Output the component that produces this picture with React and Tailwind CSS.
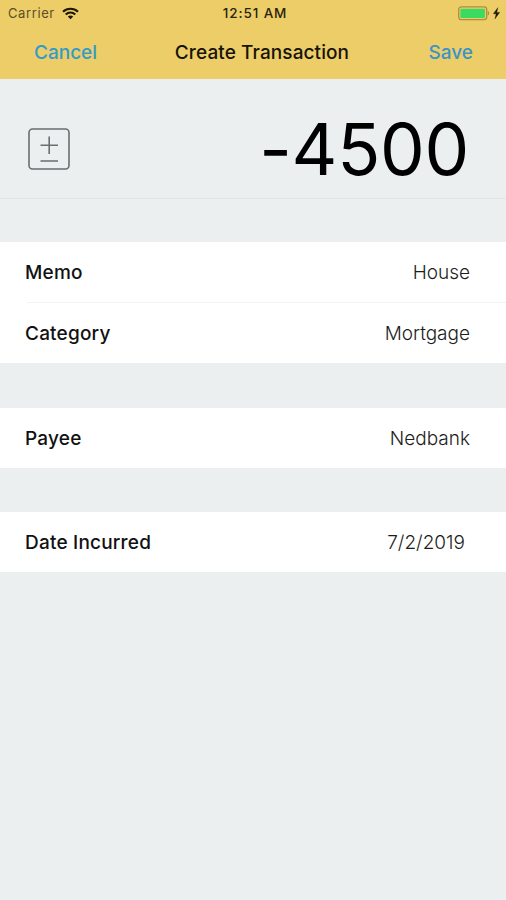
import React from 'react';

const WifiIcon = () => (
  <svg className="w-[17px] h-[13px]" viewBox="0 0 17 13" fill="none" stroke="#1c1706" strokeWidth="2.1">
    <path d="M1 4.7C5.2 0.7 11.8 0.7 16 4.7" />
    <path d="M3.7 7.6C6.5 5 10.5 5 13.3 7.6" />
    <path d="M8.5 12.2L5.8 9.5C7.4 8.1 9.6 8.1 11.2 9.5Z" fill="#1c1706" stroke="none" />
  </svg>
);

const BatteryIcon = () => (
  <svg className="w-[42px] h-[16px]" viewBox="0 0 42 16" fill="none">
    <rect x="0.7" y="0.9" width="28" height="12.8" rx="2.6" stroke="#ab903f" strokeWidth="1.3" />
    <path d="M29.8 5C31.6 5.6 31.6 8.9 29.8 9.5Z" fill="#ab903f" />
    <rect x="2.4" y="2.7" width="24.5" height="9.2" rx="1" fill="#3bdb61" />
    <path d="M39.8 1.7L35.4 7.8H38.2L37 12.8L41.6 6.4H38.7Z" fill="#1c1706" stroke="#1c1706" strokeWidth="0.4" />
  </svg>
);

const PlusMinusIcon = () => (
  <svg className="w-[42px] h-[42px]" viewBox="0 0 42 42" fill="none" stroke="#6b6e6f" strokeWidth="1.6">
    <rect x="1" y="1" width="40" height="40" rx="3.5" />
    <path d="M12.5 17.3H30M21.2 8.5V26M12.5 33H30" />
  </svg>
);

const Row = ({ label, value, className = '' }) => (
  <div className={`flex items-center justify-between h-[60px] pt-0.5 pl-[25px] text-[19px] ${className}`}>
    <span className="font-medium text-[#111] tracking-[0.2px]">{label}</span>
    <span className="font-light text-[#1c1c1c]">{value}</span>
  </div>
);

const App = () => (
  <div className="w-full h-screen overflow-hidden bg-[#ebeff0] text-black font-[Inter,sans-serif]">
    <header className="h-[79px] bg-[#eccd68]">
      <div className="grid grid-cols-[1fr_auto_1fr] items-center h-[27px] pl-2 pr-1.5 text-[13px]">
        <div className="flex items-center gap-[7px] text-[#5c4f27] tracking-[0.6px]">
          Carrier
          <WifiIcon />
        </div>
        <div className="pl-0.5 text-[13.5px] font-medium text-[#2b2410] tracking-[0.9px]">12:51 AM</div>
        <div className="flex justify-end">
          <BatteryIcon />
        </div>
      </div>
      <div className="grid grid-cols-[1fr_auto_1fr] items-center h-[52px] pl-[34px] pr-[33px] text-[19px] font-medium">
        <button className="text-left text-[#349bc9]">Cancel</button>
        <h1 className="pl-[17px] text-[#17130a] tracking-[0.1px]">Create Transaction</h1>
        <button className="text-right text-[#3b94c8]">Save</button>
      </div>
    </header>

    <main>
      <div className="flex items-center justify-between mt-[21px] h-[99px] pl-7 pr-[37px] border-b border-[#e2e6e7]">
        <PlusMinusIcon />
        <span className="text-[71px] leading-none tracking-[-0.3px] [font-feature-settings:'calt'_0]">-4500</span>
      </div>

      <section className="mt-[43px] h-[121px] bg-white">
        <Row label="Memo" value="House" className="pr-9" />
        <div className="h-px ml-[27px] bg-[#f1f2f2]" />
        <Row label="Category" value="Mortgage" className="pr-9" />
      </section>

      <section className="mt-[45px] bg-white">
        <Row label="Payee" value="Nedbank" className="pr-9" />
      </section>

      <section className="mt-11 bg-white">
        <Row label="Date Incurred" value="7/2/2019" className="pr-[41px]" />
      </section>
    </main>
  </div>
);

export default App;
